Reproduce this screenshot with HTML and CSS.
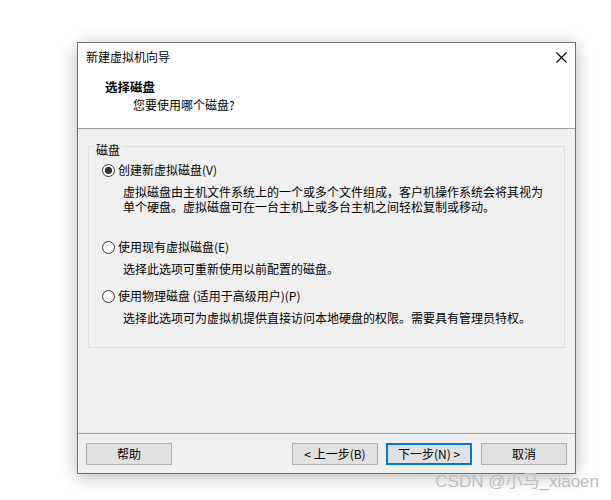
FILE: index.html
```html
<!DOCTYPE html>
<html lang="zh-CN">
<head>
<meta charset="utf-8">
<title>新建虚拟机向导</title>
<link rel="stylesheet" href="styles.css">
</head>
<body>
<div class="stage">
  <div class="window">
    <div class="head">
      <div class="titlebar">
        <span class="title">新建虚拟机向导</span>
        <span class="close">
          <svg width="11" height="11" viewBox="0 0 11 11"><path d="M0.5 0.5 L10.5 10.5 M10.5 0.5 L0.5 10.5" stroke="#000" stroke-width="1.1" fill="none"/></svg>
        </span>
      </div>
      <div class="hero">
        <div class="hero-title">选择磁盘</div>
        <div class="hero-sub">您要使用哪个磁盘?</div>
      </div>
    </div>
    <div class="content">
      <fieldset class="group">
        <legend>磁盘</legend>
        <label class="option first"><input type="radio" name="disk" checked><span>创建新虚拟磁盘(V)</span></label>
        <div class="desc d1">
          <div class="line">虚拟磁盘由主机文件系统上的一个或多个文件组成，客户机操作系统会将其视为</div>
          <div class="line">单个硬盘。虚拟磁盘可在一台主机上或多台主机之间轻松复制或移动。</div>
        </div>
        <label class="option second"><input type="radio" name="disk"><span>使用现有虚拟磁盘(E)</span></label>
        <div class="desc"><div class="line">选择此选项可重新使用以前配置的磁盘。</div></div>
        <label class="option third"><input type="radio" name="disk"><span>使用物理磁盘 (适用于高级用户)(P)</span></label>
        <div class="desc"><div class="line">选择此选项可为虚拟机提供直接访问本地硬盘的权限。需要具有管理员特权。</div></div>
      </fieldset>
    </div>
    <div class="footer">
      <button class="btn">帮助</button>
      <span class="spacer"></span>
      <button class="btn">&lt; 上一步(B)</button>
      <button class="btn primary">下一步(N) &gt;</button>
      <button class="btn cancel">取消</button>
    </div>
  </div>
</div>
<div class="watermark">CSDN @小马_xiaoen</div>
</body>
</html>
```
FILE: styles.css
```css
html, body {
  margin: 0;
  padding: 0;
}
body {
  background: #ffffff;
  font-family: "Noto Sans CJK SC", "Microsoft YaHei", sans-serif;
  font-size: 12px;
  color: #000;
  width: 611px;
  height: 500px;
  overflow: hidden;
  position: relative;
}
.stage {
  padding: 42px 0 0 77px;
}
.window {
  box-sizing: border-box;
  width: 499px;
  height: 432px;
  border: 1px solid #717171;
  background: #f0f0f0;
  box-shadow: 0 3px 16px rgba(0, 0, 0, 0.28);
  display: flex;
  flex-direction: column;
}
.head {
  flex: none;
  height: 85px;
  background: #ffffff;
  border-bottom: 1px solid #a0a0a0;
}
.titlebar {
  height: 28px;
  display: flex;
  align-items: center;
  justify-content: space-between;
  padding-left: 8px;
}
.title {
  line-height: 28px;
}
.close {
  width: 28px;
  height: 28px;
  display: flex;
  align-items: center;
  justify-content: center;
}
.close svg {
  display: block;
}
.hero {
  padding: 8px 0 0 27px;
}
.hero-title {
  font-weight: bold;
  line-height: 16px;
  font-size: 12.5px;
}
.hero-sub {
  margin-top: 2px;
  padding-left: 28px;
  line-height: 16px;
}
.content {
  flex: 1;
  padding: 5px 10px 0 10px;
}
.group {
  margin: 0;
  border: 1px solid #dcdcdc;
  padding: 0 0 22px 0;
  min-width: 0;
}
.group legend {
  margin-left: 5px;
  padding: 8px 2px 0 2px;
  line-height: 16px;
}
.option {
  display: flex;
  align-items: center;
  height: 16px;
  line-height: 16px;
  padding-left: 13px;
  white-space: nowrap;
}
.option input {
  appearance: none;
  -webkit-appearance: none;
  box-sizing: border-box;
  width: 13px;
  height: 13px;
  margin: 0 3px 0 0;
  border: 1px solid #333333;
  border-radius: 50%;
  background: #ffffff;
  flex: none;
}
.option input:checked {
  background: radial-gradient(circle, #333333 0 3.4px, #ffffff 3.9px);
}
.option.first { margin-top: 4px; }
.option.second { margin-top: 25px; }
.option.third { margin-top: 12px; }
.desc {
  margin-top: 6px;
  padding-left: 34px;
  white-space: nowrap;
}
.desc .line {
  height: 15px;
  line-height: 15px;
}
.desc.d1 {
  margin-top: 6px;
}
.footer {
  flex: none;
  border-top: 1px solid #a0a0a0;
  padding: 9px 8px 8px 8px;
  display: flex;
  align-items: center;
}
.spacer {
  flex: 1;
}
.btn {
  box-sizing: border-box;
  width: 86px;
  height: 22px;
  padding: 0;
  border: 1px solid #adadad;
  background: #e1e1e1;
  font-family: inherit;
  font-size: 12px;
  color: #000;
  line-height: 18px;
}
.btn.primary {
  margin-left: 8px;
  border: 2px solid #0078d7;
}
.btn.cancel {
  margin-left: 9px;
}
.watermark {
  position: absolute;
  right: 12px;
  top: 472px;
  font-family: "Liberation Sans", "Noto Sans CJK SC", sans-serif;
  font-size: 17px;
  line-height: 20px;
  color: #bdbdbd;
  white-space: nowrap;
}
```
